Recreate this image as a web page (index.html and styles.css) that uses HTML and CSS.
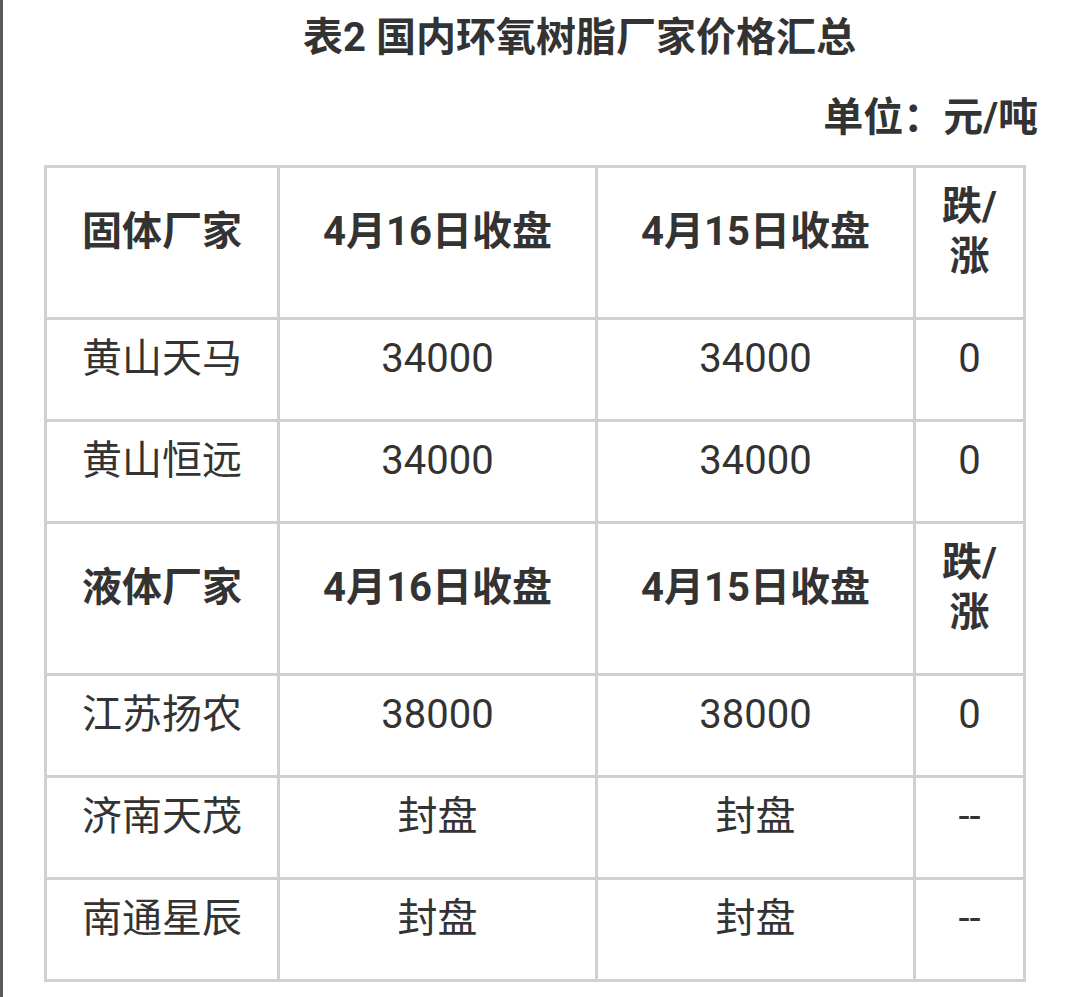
FILE: index.html
```html
<!DOCTYPE html>
<html lang="zh-CN">
<head>
<meta charset="utf-8">
<title>表2 国内环氧树脂厂家价格汇总</title>
<link rel="stylesheet" href="styles.css">
</head>
<body>
<div class="page">
  <h1 class="title">表2 国内环氧树脂厂家价格汇总</h1>
  <p class="unit">单位：元/吨</p>
  <table class="price-table">
    <colgroup>
      <col class="c1"><col class="c2"><col class="c3"><col class="c4">
    </colgroup>
    <tbody>
      <tr class="head">
        <td>固体厂家</td><td>4月16日收盘</td><td>4月15日收盘</td><td>跌/涨</td>
      </tr>
      <tr><td>黄山天马</td><td>34000</td><td>34000</td><td>0</td></tr>
      <tr><td>黄山恒远</td><td>34000</td><td>34000</td><td>0</td></tr>
      <tr class="head">
        <td>液体厂家</td><td>4月16日收盘</td><td>4月15日收盘</td><td>跌/涨</td>
      </tr>
      <tr><td>江苏扬农</td><td>38000</td><td>38000</td><td>0</td></tr>
      <tr><td>济南天茂</td><td>封盘</td><td>封盘</td><td>--</td></tr>
      <tr><td>南通星辰</td><td>封盘</td><td>封盘</td><td>--</td></tr>
    </tbody>
  </table>
</div>
</body>
</html>
```
FILE: styles.css
```css
html, body {
  margin: 0;
  padding: 0;
  background: #ffffff;
}
body {
  font-family: "Roboto", "Noto Sans CJK SC", sans-serif;
  color: #333333;
}
.page {
  width: 1077px;
  min-height: 997px;
  border-left: 3px solid #5a5a5a;
  box-sizing: content-box;
}
.title {
  margin: 0;
  padding: 12px 0 0 76px;
  font-size: 40px;
  line-height: 52px;
  font-weight: 700;
  text-align: center;
}
.unit {
  margin: 28px 0 0;
  padding-right: 42px;
  font-size: 40px;
  line-height: 52px;
  font-weight: 700;
  text-align: right;
}
.price-table {
  margin: 21px 0 0 41px;
  width: 982px;
  table-layout: fixed;
  border-collapse: separate;
  border-spacing: 0;
  border-top: 3px solid #d0d0d0;
  border-left: 3px solid #d0d0d0;
}
.c1 { width: 233px; }
.c2 { width: 318px; }
.c3 { width: 318px; }
.c4 { width: 110px; }
.price-table td {
  border-right: 3px solid #d0d0d0;
  border-bottom: 3px solid #d0d0d0;
  padding: 14px 10px 35px;
  font-size: 40px;
  line-height: 50px;
  text-align: center;
  vertical-align: middle;
}
.price-table .head td {
  font-weight: 700;
}
```
